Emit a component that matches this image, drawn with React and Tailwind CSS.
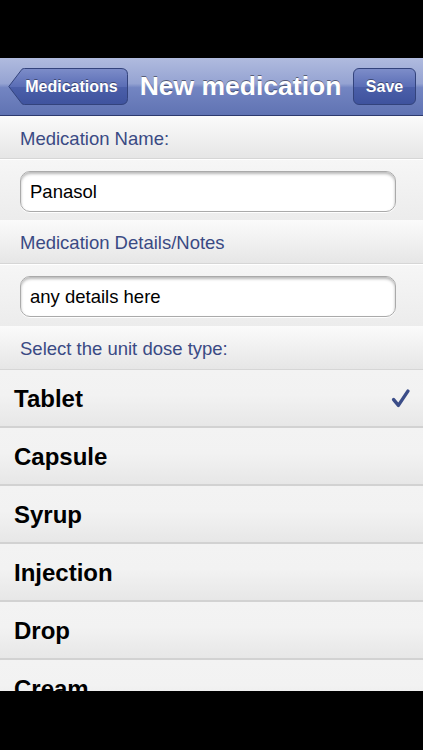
import React from "react";

const font = { fontFamily: '"Liberation Sans", Arial, Helvetica, sans-serif' };

function Header({ children, h }) {
  return (
    <div
      className={`${h} shrink-0 flex items-center pl-[20px] pt-[3px] bg-gradient-to-b from-[#fbfbfb] to-[#e6e6e6] border-b border-[#d6d6d6] text-[18.5px] text-[#3a4a84]`}
    >
      {children}
    </div>
  );
}

function InputSection({ h, value }) {
  return (
    <div className={`${h} shrink-0 flex flex-col pt-[11px] px-[20px] bg-gradient-to-b from-[#f6f6f6] to-[#ececec] border-t border-white`}>
      <div className="h-[41px] w-[376px] rounded-[10px] bg-white border border-[#aaaaaa] shadow-[inset_0_2px_3px_rgba(0,0,0,0.28),0_1px_0_rgba(255,255,255,0.9)] flex items-center pl-[9px] text-[18.5px] text-black">
        {value}
      </div>
    </div>
  );
}

function Row({ label, checked }) {
  return (
    <div className="h-[58px] shrink-0 relative flex items-center justify-between pl-[14px] pr-[13px] pt-[1px] bg-[linear-gradient(to_bottom,#f3f3f3_0%,#f2f2f2_45%,#e7e7e7_100%)] border-b-2 border-[#d2d2d2]">
      <span className="text-[24px] font-bold text-black">{label}</span>
      {checked && (
        <svg width="19" height="19" viewBox="0 0 18 18">
          <path d="M2.5 10 L7 15.5 L16 2" fill="none" stroke="#3b4d88" strokeWidth="3.2" strokeLinecap="round" strokeLinejoin="round" />
        </svg>
      )}
    </div>
  );
}

export default function App() {
  return (
    <div className="w-[423px] h-[750px] bg-black flex flex-col overflow-hidden" style={font}>
      <div className="h-[58px] shrink-0 bg-black" />
      {/* Nav bar */}
      <div className="h-[58px] shrink-0 relative flex items-center px-[8px] bg-[linear-gradient(to_bottom,#b0bbdf_0%,#95a3d2_45%,#7385c2_52%,#6073b3_100%)] border-b border-[#2d3a6e]">
        <div className="relative w-[120px] h-[37px] shrink-0 flex items-center justify-center">
          <svg width="120" height="37" viewBox="0 0 120 37" className="absolute inset-0">
            <defs>
              <linearGradient id="bb" x1="0" y1="0" x2="0" y2="1">
                <stop offset="0" stopColor="#7d8dc9" />
                <stop offset="0.5" stopColor="#5b6eb6" />
                <stop offset="0.52" stopColor="#4b5fa9" />
                <stop offset="1" stopColor="#3f539e" />
              </linearGradient>
            </defs>
            <path
              d="M0.8 18.5 L14 1.2 Q15 0.5 16.5 0.5 L113 0.5 Q119.5 0.5 119.5 6.5 L119.5 30.5 Q119.5 36.5 113 36.5 L16.5 36.5 Q15 36.5 14 35.8 Z"
              fill="url(#bb)"
              stroke="#33437c"
              strokeWidth="1"
            />
          </svg>
          <span className="relative text-white font-bold text-[16px] pl-[7px] [text-shadow:0_-1px_0_rgba(0,0,0,0.4)]">Medications</span>
        </div>
        <div className="flex-1 flex justify-center">
          <span className="text-white font-bold text-[26.5px] [text-shadow:0_-1px_0_rgba(0,0,0,0.45)]">New medication</span>
        </div>
        <div className="w-[63px] h-[37px] shrink-0 rounded-[6px] border border-[#33437c] bg-[linear-gradient(to_bottom,#7d8dc9_0%,#5b6eb6_50%,#4b5fa9_52%,#3f539e_100%)] flex items-center justify-center mr-[-1px]">
          <span className="text-white font-bold text-[16px] [text-shadow:0_-1px_0_rgba(0,0,0,0.4)]">Save</span>
        </div>
      </div>

      <Header h="h-[43px]">Medication Name:</Header>
      <InputSection h="h-[61px]" value="Panasol" />
      <Header h="h-[44px]">Medication Details/Notes</Header>
      <InputSection h="h-[62px]" value="any details here" />
      <Header h="h-[44px]">Select the unit dose type:</Header>

      <div className="flex-1 min-h-0 overflow-hidden flex flex-col">
        <Row label="Tablet" checked />
        <Row label="Capsule" />
        <Row label="Syrup" />
        <Row label="Injection" />
        <Row label="Drop" />
        <Row label="Cream" />
      </div>
      <div className="h-[59px] shrink-0 bg-black" />
    </div>
  );
}
